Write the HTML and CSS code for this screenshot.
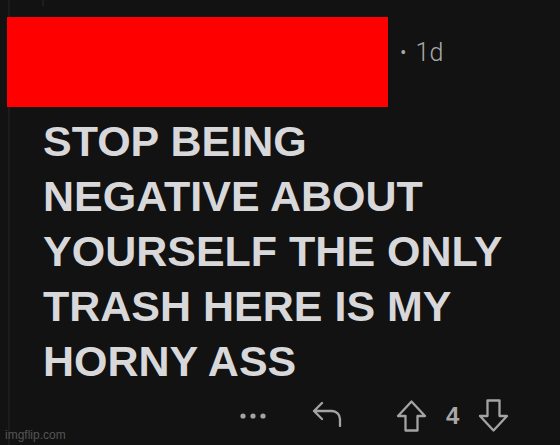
FILE: index.html
```html
<!DOCTYPE html>
<html lang="en">
<head>
    <meta charset="UTF-8">
    <title>Comment</title>
    <link rel="stylesheet" href="styles.css">
</head>
<body>

    <div class="thread">
        <div class="stub"></div>

        <div class="comment-head">
            <div class="redacted"></div>
            <span class="meta"><span class="dot">•</span> 1d</span>
        </div>

        <p class="comment-body">
            STOP BEING<br>
            NEGATIVE ABOUT<br>
            YOURSELF THE ONLY<br>
            TRASH HERE IS MY<br>
            HORNY ASS
        </p>

        <div class="actions">
            <svg class="more" width="26" height="6" viewBox="0 0 26 6">
                <circle cx="3" cy="3" r="2.6"/>
                <circle cx="13" cy="3" r="2.6"/>
                <circle cx="23" cy="3" r="2.6"/>
            </svg>
            <svg class="reply" width="31" height="26" viewBox="0 0 31 26">
                <path d="M10 2 L2 10 L10 18 M2 10 H20 A8 8 0 0 1 28 18 V25"/>
            </svg>
            <div class="votes">
                <svg width="31" height="32" viewBox="0 0 31 32">
                    <path d="M15.5 1.5 L29 16 H21.5 V30.5 H9.5 V16 H2 Z"/>
                </svg>
                <span class="score">4</span>
                <svg width="31" height="33" viewBox="0 0 31 33">
                    <path d="M15.5 31.5 L29 17 H21.5 V1.5 H9.5 V17 H2 Z"/>
                </svg>
            </div>
        </div>
    </div>

    <span class="watermark">imgflip.com</span>

</body>
</html>
```

FILE: styles.css
```css
* {
    margin: 0;
    padding: 0;
    box-sizing: border-box;
}

body, html {
    height: 100%;
    width: 100%;
}

body {
    background-color: #121212;
    font-family: 'Liberation Sans', Arial, sans-serif;
    position: relative;
    overflow: hidden;
}

.thread {
    margin-left: 8px;
    height: 100%;
    border-left: 2px solid #1c1c1c;
    padding-top: 17px;
    position: relative;
}

.stub {
    position: absolute;
    left: 32px;
    top: 0;
    width: 2px;
    height: 6px;
    background-color: #1e1e1e;
}

.comment-head {
    display: flex;
    align-items: center;
    margin-left: -3px;
}

.redacted {
    width: 381px;
    height: 90px;
    background-color: #ff0000;
}

.meta {
    font-family: 'Roboto', sans-serif;
    font-weight: 300;
    font-size: 25px;
    color: #a8a8a8;
    margin-left: 12px;
    margin-top: -20px;
}

.meta .dot {
    font-size: 20px;
    margin-right: 3px;
    vertical-align: 2px;
}

.comment-body {
    margin-top: 7px;
    margin-left: 33px;
    font-size: 43px;
    font-weight: bold;
    line-height: 55px;
    color: #d8d8da;
}

.actions {
    display: flex;
    align-items: center;
    margin-top: 10px;
    padding-left: 230px;
}

.actions svg {
    display: block;
}

.more {
    fill: #a4a4a4;
}

.reply {
    margin-left: 46px;
    margin-top: -3px;
}

.reply path,
.votes path {
    fill: none;
    stroke: #a4a4a4;
    stroke-width: 2.3;
    stroke-linejoin: round;
    stroke-linecap: round;
}

.votes {
    display: flex;
    align-items: center;
    margin-left: 53px;
}

.score {
    font-size: 24px;
    font-weight: bold;
    color: #a8a8a8;
    margin: 0 19px 0 19px;
}

.watermark {
    position: absolute;
    left: 5px;
    bottom: 3px;
    font-size: 12px;
    color: #555555;
}
```
